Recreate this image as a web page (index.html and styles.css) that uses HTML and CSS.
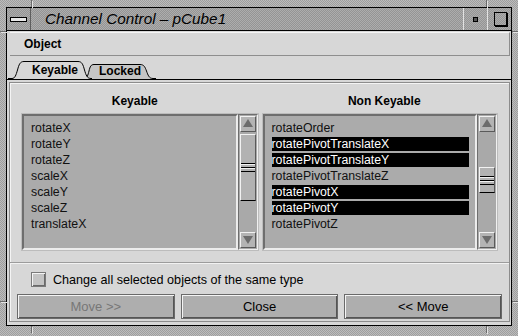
FILE: index.html
```html
<!DOCTYPE html>
<html lang="en">
<head>
    <meta charset="UTF-8">
    <title>Channel Control - pCube1</title>
    <link rel="stylesheet" href="styles.css">
</head>
<body>
    <div class="frame">
        <span class="notch v" style="left:31px;top:0"></span>
        <span class="notch v" style="left:486px;top:0"></span>
        <span class="notch v" style="left:31px;top:326px"></span>
        <span class="notch v" style="left:486px;top:326px"></span>
        <span class="notch h" style="left:0;top:31px"></span>
        <span class="notch h" style="left:512px;top:31px"></span>
        <span class="notch h" style="left:0;top:301px"></span>
        <span class="notch h" style="left:512px;top:301px"></span>

        <div class="window">
            <div class="titlebar">
                <div class="tb-btn menu-btn"><span class="bar"></span></div>
                <div class="title">Channel Control – pCube1</div>
                <div class="tb-btn min-btn"><span class="dot"></span></div>
                <div class="tb-btn max-btn"><span class="sq"></span></div>
            </div>

            <div class="menubar"><span class="menu-item">Object</span></div>

            <div class="tabs">
                <div class="tab active">
                    <svg class="tab-shape" width="84" height="18" viewBox="0 0 84 18">
                        <path d="M0,17.5 H4 C7,17.5 8,14 9.5,9 C11,3.5 12,0.5 16,0.5 H70 C74,0.5 75,3.5 76.5,9 C78,14 79,17.5 83,17.5 H84 V18 H0 Z" fill="#d7d7d7"/>
                        <path d="M0,17.5 H4 C7,17.5 8,14 9.5,9 C11,3.5 12,0.5 16,0.5 H70 C74,0.5 75,3.5 76.5,9 C78,14 79,17.5 83,17.5 H84" fill="none" stroke="#000"/>
                    </svg>
                    <span class="tab-label">Keyable</span>
                </div>
                <div class="tab locked">
                    <svg class="tab-shape" width="72" height="15" viewBox="0 0 72 15">
                        <path d="M0,14.5 C3,14.5 4,11 5,7 C6,2.5 7,0.5 10,0.5 H56 C60,0.5 61,3 62.5,7 C64,11 65,14.5 69,14.5 H72 V15 H0 Z" fill="#c5c5c5"/>
                        <path d="M0,14.5 C3,14.5 4,11 5,7 C6,2.5 7,0.5 10,0.5 H56 C60,0.5 61,3 62.5,7 C64,11 65,14.5 69,14.5 H72" fill="none" stroke="#000"/>
                    </svg>
                    <span class="tab-label">Locked</span>
                </div>
            </div>

            <div class="panel">
                <div class="panel-inner">
                    <div class="lists">
                        <div class="column left">
                            <div class="col-title">Keyable</div>
                            <div class="listbox">
                                <ul class="items">
                                    <li>rotateX</li>
                                    <li>rotateY</li>
                                    <li>rotateZ</li>
                                    <li>scaleX</li>
                                    <li>scaleY</li>
                                    <li>scaleZ</li>
                                    <li>translateX</li>
                                </ul>
                                <div class="scrollbar">
                                    <div class="arrow"><svg width="14" height="14" viewBox="0 0 14 14"><polygon points="7,2 12,10 2,10" fill="#6c6c6c"/></svg></div>
                                    <div class="trough">
                                        <div class="thumb big"><span class="grip"></span></div>
                                    </div>
                                    <div class="arrow"><svg width="14" height="14" viewBox="0 0 14 14"><polygon points="2,3 12,3 7,11" fill="#6c6c6c"/></svg></div>
                                </div>
                            </div>
                        </div>
                        <div class="column right">
                            <div class="col-title">Non Keyable</div>
                            <div class="listbox">
                                <ul class="items">
                                    <li>rotateOrder</li>
                                    <li class="selected">rotatePivotTranslateX</li>
                                    <li class="selected">rotatePivotTranslateY</li>
                                    <li>rotatePivotTranslateZ</li>
                                    <li class="selected">rotatePivotX</li>
                                    <li class="selected">rotatePivotY</li>
                                    <li>rotatePivotZ</li>
                                </ul>
                                <div class="scrollbar">
                                    <div class="arrow"><svg width="14" height="14" viewBox="0 0 14 14"><polygon points="7,2 12,10 2,10" fill="#6c6c6c"/></svg></div>
                                    <div class="trough">
                                        <div class="thumb small"><span class="grip"></span></div>
                                    </div>
                                    <div class="arrow"><svg width="14" height="14" viewBox="0 0 14 14"><polygon points="2,3 12,3 7,11" fill="#6c6c6c"/></svg></div>
                                </div>
                            </div>
                        </div>
                    </div>

                    <div class="separator"></div>

                    <label class="check">
                        <span class="box"></span>
                        <span>Change all selected objects of the same type</span>
                    </label>

                    <div class="buttons">
                        <button class="disabled">Move &gt;&gt;</button>
                        <button>Close</button>
                        <button>&lt;&lt; Move</button>
                    </div>
                </div>
            </div>
        </div>
    </div>
</body>
</html>
```

FILE: styles.css
```css
* {
    margin: 0;
    padding: 0;
    box-sizing: border-box;
}

body {
    width: 518px;
    height: 336px;
    overflow: hidden;
    font-family: "Liberation Sans", Arial, sans-serif;
    color: #000;
    background: repeating-conic-gradient(#bcbcbc 0 25%, #9e9e9e 0 50%) 0 0 / 2px 2px;
}

.frame {
    position: relative;
    width: 518px;
    height: 336px;
    padding: 7px 0 0 6px;
}

.notch {
    position: absolute;
    background: #6a6a6a;
    box-shadow: 1px 1px 0 #e4e4e4;
}

.notch.v {
    width: 1px;
    height: 7px;
}

.notch.h {
    width: 6px;
    height: 1px;
}

.window {
    width: 506px;
    height: 319px;
    border: 1px solid #000;
    background: #d7d7d7;
    display: flex;
    flex-direction: column;
}

/* title bar */
.titlebar {
    display: flex;
    height: 23px;
    border-bottom: 1px solid #000;
    background: repeating-conic-gradient(#adadad 0 25%, #949494 0 50%) 0 0 / 2px 2px;
}

.tb-btn {
    width: 24px;
    display: flex;
    align-items: center;
    justify-content: center;
}

.menu-btn {
    border-right: 1px solid #5e5e5e;
}

.bar {
    width: 17px;
    height: 5px;
    border: 1px solid #000;
    background: #e8e8e8;
    margin-top: 1px;
}

.title {
    flex: 1;
    font-style: italic;
    font-size: 15.3px;
    line-height: 22px;
    padding-left: 14px;
}

.min-btn,
.max-btn {
    border-left: 1px solid #e2e2e2;
}

.dot {
    width: 5px;
    height: 5px;
    border: 1px solid #000;
    background: #555;
    margin-top: 1px;
}

.sq {
    width: 13px;
    height: 14px;
    border: 1px solid #000;
    box-shadow: 1px 1px 0 #000;
    margin-left: 1px;
}

/* menu */
.menubar {
    margin: 1px 1px 0 3px;
    height: 24px;
    border-top: 1px solid #f6f6f6;
    border-bottom: 1px solid #8e8e8e;
    border-right: 1px solid #8e8e8e;
    padding-left: 14px;
    font-size: 12px;
    font-weight: bold;
    line-height: 22px;
}

/* tabs */
.tabs {
    height: 23px;
    display: flex;
    align-items: flex-end;
    padding-left: 1px;
}

.tab {
    position: relative;
    font-size: 12px;
    font-weight: bold;
}

.tab-shape {
    position: absolute;
    left: 0;
    top: 0;
    display: block;
}

.tab-label {
    position: relative;
}

.tab.active {
    width: 84px;
    height: 18px;
    padding: 1px 0 0 24px;
    line-height: 17px;
    z-index: 2;
}

.tab.locked {
    width: 72px;
    height: 15px;
    margin-left: -8px;
    padding-left: 15px;
    line-height: 14px;
    z-index: 1;
}

/* panel */
.panel {
    flex: 1;
    border-top: 1px solid #000;
    padding: 2px 1px 3px 2px;
    display: flex;
}

.panel-inner {
    flex: 1;
    border: 1px solid #8c8c8c;
    box-shadow: inset 1px 1px 0 #f4f4f4;
    display: flex;
    flex-direction: column;
}

.lists {
    display: flex;
}

.column {
    flex: 1;
}

.col-title {
    height: 30px;
    padding-top: 10px;
    line-height: 16px;
    text-align: center;
    font-size: 12px;
    font-weight: bold;
}

.column.left .listbox {
    margin: 0 1px 0 11px;
}

.column.right .listbox {
    margin: 0 11px 0 2px;
}

.listbox {
    height: 138px;
    display: flex;
    border: 1px solid #bcbcbc;
}

.items {
    flex: 1;
    list-style: none;
    background: #ababab;
    border: 2px solid;
    border-color: #6e6e6e #ececec #ececec #6e6e6e;
    padding: 5px 0 0 7px;
    font-size: 12.3px;
    color: #111;
}

.items li {
    height: 14px;
    line-height: 14px;
    margin: 0 6px 2px 0;
    white-space: nowrap;
}

.items li.selected {
    background: #000;
    color: #fff;
}

.scrollbar {
    width: 20px;
    display: flex;
    flex-direction: column;
    border: 1px solid;
    border-color: #6e6e6e #f0f0f0 #f0f0f0 #6e6e6e;
    padding: 1px;
    background: #a9a9a9;
}

.arrow {
    height: 16px;
    display: flex;
    align-items: center;
    justify-content: center;
    background: #b4b4b4;
    border: 1px solid;
    border-color: #f2f2f2 #5a5a5a #5a5a5a #f2f2f2;
}

.trough {
    flex: 1;
    padding-top: 2px;
}

.thumb {
    display: flex;
    align-items: center;
    background: #b2b2b2;
    border: 1px solid;
    border-color: #f2f2f2 #5a5a5a #000 #f2f2f2;
}

.thumb.big {
    height: 67px;
}

.thumb.small {
    height: 26px;
    margin-top: 33px;
}

.grip {
    width: 100%;
    height: 9px;
    background: linear-gradient(#000 0 1px, #f2f2f2 1px 2px, transparent 2px 4px, #000 4px 5px, #f2f2f2 5px 6px, transparent 6px 8px, #000 8px 9px);
}

.separator {
    margin-top: 11px;
    height: 2px;
    border-top: 1px solid #9c9c9c;
    border-bottom: 1px solid #f2f2f2;
}

.check {
    margin: 8px 0 0 21px;
    height: 15px;
    display: flex;
    align-items: center;
    gap: 7px;
    font-size: 12.6px;
}

.box {
    width: 15px;
    height: 15px;
    background: #c4c4c4;
    border: 1px solid #7a7a7a;
    box-shadow: inset 1px 1px 0 #f4f4f4, inset -1px -1px 0 #6a6a6a;
}

.buttons {
    margin: 7px 7px 0;
    display: flex;
    gap: 6px;
}

button {
    flex: 1;
    height: 25px;
    font-family: "Liberation Sans", Arial, sans-serif;
    font-size: 13px;
    color: #000;
    background: #aeaeae;
    border: 1px solid #6a6a6a;
    box-shadow: inset 1px 1px 0 #f4f4f4, inset -1px -1px 0 #555;
}

button.disabled {
    color: #777;
}
```
